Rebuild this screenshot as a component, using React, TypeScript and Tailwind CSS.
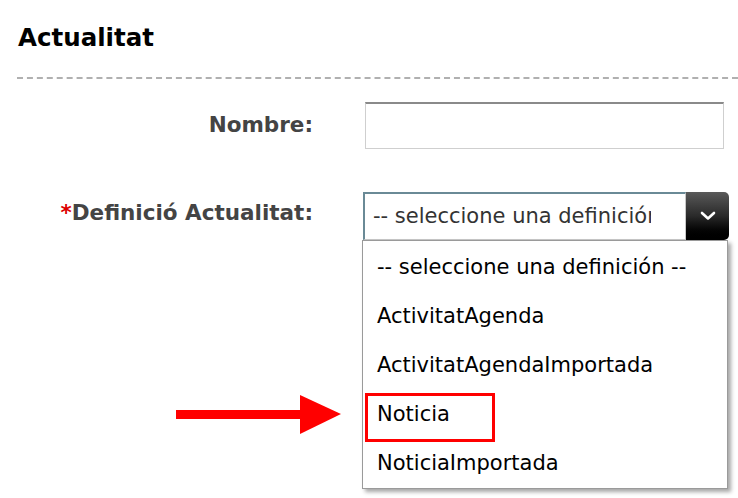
import React from 'react';

const options = [
    '-- seleccione una definición --',
    'ActivitatAgenda',
    'ActivitatAgendaImportada',
    'Noticia',
    'NoticiaImportada',
];

// Red annotation arrow pointing at the "Noticia" option
function PointerArrow() {
    return (
        <svg width="166" height="42" viewBox="0 0 166 42" className="absolute left-[176px] top-[394px]">
            <rect x="0" y="16" width="130" height="9" fill="#ff0000" />
            <polygon points="124,1 165,20 124,40" fill="#ff0000" />
        </svg>
    );
}

export default function App() {
    return (
        <div className="relative w-[738px] h-[498px] overflow-hidden bg-white font-['DejaVu_Sans',sans-serif]">
            <div className="pl-[18px] pt-[22px]">
                <h2 className="text-[24.5px] font-bold text-black leading-[32px]">Actualitat</h2>
            </div>
            <div className="ml-[17px] mt-[23px] border-t-2 border-dashed border-[#b0b0b0]" />

            <div className="flex flex-col mt-[23px]">
                {/* Nombre */}
                <div className="flex items-center">
                    <label className="w-[313px] text-right text-[21.5px] font-bold text-[#444]">Nombre:</label>
                    <input className="ml-[52px] w-[359px] h-[47px] border border-[#cfcfcf] border-t-2 border-t-[#8a8a8a] bg-white outline-none" />
                </div>

                {/* Definició */}
                <div className="flex items-start mt-[43px]">
                    <label className="w-[313px] pt-[5px] text-right text-[21.5px] font-bold text-[#444] whitespace-nowrap">
                        <span className="text-[#dd0000]">*</span>Definició Actualitat:
                    </label>
                    <div className="relative ml-[50px]">
                        <div className="flex w-[366px] h-[48px]">
                            <div className="flex-1 min-w-0 flex items-center pl-[8px] pr-[34px] border border-[#c8c8c8] border-t-2 border-t-[#6a8a96] border-l-2 border-l-[#6a8a96] bg-white">
                                <span className="block text-[21px] text-[#333] whitespace-nowrap overflow-hidden">-- seleccione una definición --</span>
                            </div>
                            <div className="w-[43px] h-[48px] shrink-0 rounded-r-[5px] bg-gradient-to-b from-[#5a5a5a] via-[#2a2a2a] to-black flex items-center justify-center">
                                <svg width="16" height="10" viewBox="0 0 16 10">
                                    <path d="M2 2 L8 7.5 L14 2" stroke="white" strokeWidth="2.6" fill="none" strokeLinecap="round" strokeLinejoin="round" />
                                </svg>
                            </div>
                        </div>

                        {/* open dropdown list */}
                        <div className="absolute left-[-1px] top-[48px] w-[366px] bg-white border border-[#9a9a9a] shadow-[3px_3px_4px_rgba(0,0,0,0.35)] pt-[2px]">
                            {options.map((o) => (
                                <div key={o} className="relative h-[49px] flex items-center pl-[14px] text-[21px] text-black whitespace-nowrap">
                                    {o}
                                    {o === 'Noticia' && (
                                        <div className="absolute left-[2px] top-[3px] w-[130px] h-[49px] border-[3px] border-[#ff0000]" />
                                    )}
                                </div>
                            ))}
                        </div>
                    </div>
                </div>
            </div>

            <PointerArrow />
        </div>
    );
}
